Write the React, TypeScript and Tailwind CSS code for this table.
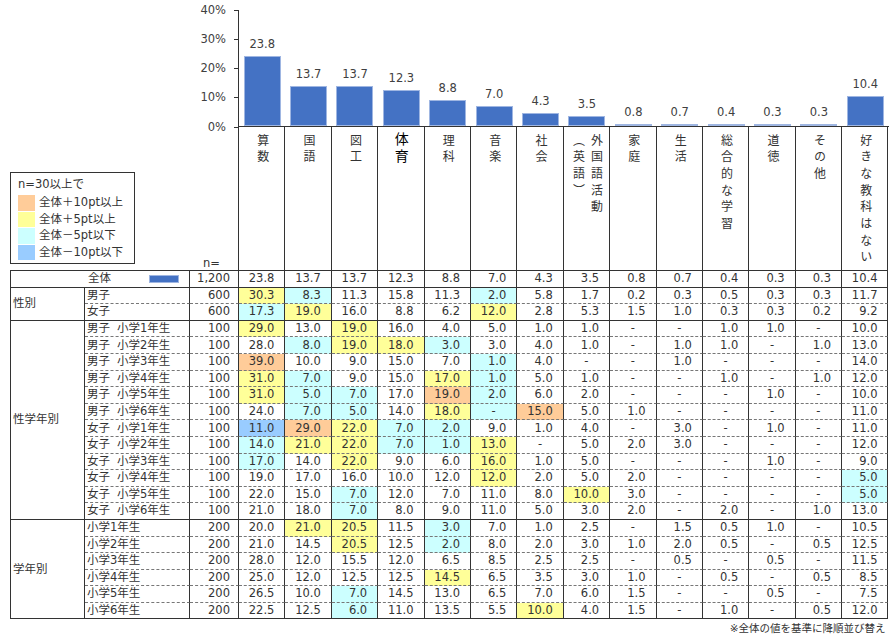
import React from "react";

const FONT = "font-['DejaVu_Sans','Noto_Sans_CJK_JP',sans-serif]";

type Col = { label: React.ReactNode; v: number; special?: "pe" | "two" };

const cols: Col[] = [
  { label: "算数", v: 23.8 },
  { label: "国語", v: 13.7 },
  { label: "図工", v: 13.7 },
  { label: "体育", v: 12.3, special: "pe" },
  { label: "理科", v: 8.8 },
  { label: "音楽", v: 7.0 },
  { label: "社会", v: 4.3 },
  { label: "外国語活動（英語）", v: 3.5, special: "two" },
  { label: "家庭", v: 0.8 },
  { label: "生活", v: 0.7 },
  { label: "総合的な学習", v: 0.4 },
  { label: "道徳", v: 0.3 },
  { label: "その他", v: 0.3 },
  { label: "好きな教科はない", v: 10.4 },
];

type Row = { a?: string; b: string; n: string; vals: string; hl: string };

const groups: { name: string; rows: Row[] }[] = [
  {
    name: "性別",
    rows: [
      { b: "男子", n: "600", vals: "30.3 8.3 11.3 15.8 11.3 2.0 5.8 1.7 0.2 0.3 0.5 0.3 0.3 11.7", hl: "YC...C........" },
      { b: "女子", n: "600", vals: "17.3 19.0 16.0 8.8 6.2 12.0 2.8 5.3 1.5 1.0 0.3 0.3 0.2 9.2", hl: "CY...Y........" },
    ],
  },
  {
    name: "性学年別",
    rows: [
      { a: "男子", b: "小学1年生", n: "100", vals: "29.0 13.0 19.0 16.0 4.0 5.0 1.0 1.0 - - 1.0 1.0 - 10.0", hl: "Y.Y..........." },
      { a: "男子", b: "小学2年生", n: "100", vals: "28.0 8.0 19.0 18.0 3.0 3.0 4.0 1.0 - 1.0 1.0 - 1.0 13.0", hl: ".CYYC........." },
      { a: "男子", b: "小学3年生", n: "100", vals: "39.0 10.0 9.0 15.0 7.0 1.0 4.0 - - 1.0 - - - 14.0", hl: "O....C........" },
      { a: "男子", b: "小学4年生", n: "100", vals: "31.0 7.0 9.0 15.0 17.0 1.0 5.0 1.0 - - 1.0 - 1.0 12.0", hl: "YC..YC........" },
      { a: "男子", b: "小学5年生", n: "100", vals: "31.0 5.0 7.0 17.0 19.0 2.0 6.0 2.0 - - - 1.0 - 10.0", hl: "YCC.OC........" },
      { a: "男子", b: "小学6年生", n: "100", vals: "24.0 7.0 5.0 14.0 18.0 - 15.0 5.0 1.0 - - - - 11.0", hl: ".CC.YCO......." },
      { a: "女子", b: "小学1年生", n: "100", vals: "11.0 29.0 22.0 7.0 2.0 9.0 1.0 4.0 - 3.0 - 1.0 - 11.0", hl: "BOYCC........." },
      { a: "女子", b: "小学2年生", n: "100", vals: "14.0 21.0 22.0 7.0 1.0 13.0 - 5.0 2.0 3.0 - - - 12.0", hl: "CYYCCY........" },
      { a: "女子", b: "小学3年生", n: "100", vals: "17.0 14.0 22.0 9.0 6.0 16.0 1.0 5.0 - - - 1.0 - 9.0", hl: "C.Y..Y........" },
      { a: "女子", b: "小学4年生", n: "100", vals: "19.0 17.0 16.0 10.0 12.0 12.0 2.0 5.0 2.0 - - - - 5.0", hl: ".....Y.......C" },
      { a: "女子", b: "小学5年生", n: "100", vals: "22.0 15.0 7.0 12.0 7.0 11.0 8.0 10.0 3.0 - - - - 5.0", hl: "..C....Y.....C" },
      { a: "女子", b: "小学6年生", n: "100", vals: "21.0 18.0 7.0 8.0 9.0 11.0 5.0 3.0 2.0 - 2.0 - 1.0 13.0", hl: "..C..........." },
    ],
  },
  {
    name: "学年別",
    rows: [
      { b: "小学1年生", n: "200", vals: "20.0 21.0 20.5 11.5 3.0 7.0 1.0 2.5 - 1.5 0.5 1.0 - 10.5", hl: ".YY.C........." },
      { b: "小学2年生", n: "200", vals: "21.0 14.5 20.5 12.5 2.0 8.0 2.0 3.0 1.0 2.0 0.5 - 0.5 12.5", hl: "..Y.C........." },
      { b: "小学3年生", n: "200", vals: "28.0 12.0 15.5 12.0 6.5 8.5 2.5 2.5 - 0.5 - 0.5 - 11.5", hl: ".............." },
      { b: "小学4年生", n: "200", vals: "25.0 12.0 12.5 12.5 14.5 6.5 3.5 3.0 1.0 - 0.5 - 0.5 8.5", hl: "....Y........." },
      { b: "小学5年生", n: "200", vals: "26.5 10.0 7.0 14.5 13.0 6.5 7.0 6.0 1.5 - - 0.5 - 7.5", hl: "..C..........." },
      { b: "小学6年生", n: "200", vals: "22.5 12.5 6.0 11.0 13.5 5.5 10.0 4.0 1.5 - 1.0 - 0.5 12.0", hl: "..C...Y......." },
    ],
  },
];

const HL: Record<string, string> = {
  Y: "bg-[#ffff99]",
  C: "bg-[#ccffff]",
  O: "bg-[#ffcc99]",
  B: "bg-[#99ccff]",
  ".": "",
};

const legend = [
  { c: "bg-[#ffcc99]", t: "全体＋10pt以上" },
  { c: "bg-[#ffff99]", t: "全体＋5pt以上" },
  { c: "bg-[#ccffff]", t: "全体－5pt以下" },
  { c: "bg-[#99ccff]", t: "全体－10pt以下" },
];

function DataCells({ vals, hl, dashed }: { vals: string; hl: string; dashed: boolean }) {
  const v = vals.split(" ");
  return (
    <>
      {v.map((x, i) => (
        <div
          key={i}
          className={`flex items-center border-r border-b border-[#333] ${dashed ? "[border-bottom-style:dashed] [border-bottom-color:#777]" : ""} ${HL[hl[i]]} ${x === "-" ? "justify-center" : "justify-end pr-[10px]"}`}
        >
          {x}
        </div>
      ))}
    </>
  );
}

export default function App() {
  return (
    <div className={`w-[895px] h-[640px] bg-white pl-[10px] text-[11.5px] text-[#333] ${FONT}`}>
      {/* chart + header */}
      <div className="flex h-[270px]">
        <div className="w-[228px] h-full flex flex-col">
          <div className="mt-[3.5px] h-[130px] flex flex-col justify-between text-[#404040]">
            {["40%", "30%", "20%", "10%", "0%"].map((l) => (
              <div key={l} className="h-[13px] flex items-center justify-end">
                <span className="leading-[13px]">{l}</span>
                <span className="ml-[8px] w-[4px] h-px bg-[#333]" />
              </div>
            ))}
          </div>
          <div className="flex-1" />
          <div className="flex items-end justify-between">
            <div className="w-[125px] border border-[#333] pl-[7px] pt-[4px] pb-[3px] mb-[6px]">
              <div className="leading-[15px]">n=30以上で</div>
              <div className="mt-[3px] flex flex-col gap-[1px]">
                {legend.map((l) => (
                  <div key={l.t} className="flex items-center h-[15.5px]">
                    <span className={`w-[17px] h-full ${l.c}`} />
                    <span className="ml-[4px] leading-[15px]">{l.t}</span>
                  </div>
                ))}
              </div>
            </div>
            <span className="mr-[18px] leading-[13px]">n=</span>
          </div>
        </div>
        <div className="w-[650.6px] h-full flex flex-col">
          <div className="h-[127px] pt-[10px]">
            <div className="h-[117px] border-l border-b border-[#333] flex">
              {cols.map((c, i) => (
                <div key={i} className="w-[46.4px] h-full flex flex-col justify-end items-center">
                  <span className="leading-[13px] mb-[5px] text-[#404040]">{c.v.toFixed(1)}</span>
                  <div
                    className="w-[37px] bg-[#4472c4] border border-[#9fb6e2]"
                    style={{ height: `${(c.v * 117) / 40}px` }}
                  />
                </div>
              ))}
            </div>
          </div>
          <div className="flex-1 flex border-l border-[#333]">
            {cols.map((c, i) => (
              <div
                key={i}
                className={`w-[46.4px] h-full border-r border-[#333] flex justify-center ${c.special === "pe" ? "pt-[5px]" : "pt-[7px]"}`}
              >
                {c.special === "pe" ? (
                  <div className="[writing-mode:vertical-rl] text-[14px] tracking-[2.7px] leading-[18px] text-black">
                    {c.label}
                  </div>
                ) : c.special === "two" ? (
                  <div className="[writing-mode:vertical-rl] text-[12px] tracking-[4.7px] leading-[18px]">
                    外国語活動
                    <br />
                    （英語）
                  </div>
                ) : (
                  <div className="[writing-mode:vertical-rl] text-[12px] tracking-[4.7px] leading-[18px]">
                    {c.label}
                  </div>
                )}
              </div>
            ))}
          </div>
        </div>
      </div>

      {/* table */}
      <div className="grid w-fit grid-cols-[74px_105px_49px_repeat(14,46.4px)] auto-rows-[16.6px] border-l border-t border-[#333]">
        <div className="col-span-2 flex items-center border-r border-b border-[#333]">
          <span className="w-[74px] shrink-0" />
          <span className="pl-[3px]">全体</span>
          <span className="ml-auto mr-[10px] w-[30px] h-[8px] bg-[#4472c4] border border-[#9fb6e2]" />
        </div>
        <div className="flex items-center justify-end pr-[8px] border-r border-b border-[#333]">1,200</div>
        <DataCells vals="23.8 13.7 13.7 12.3 8.8 7.0 4.3 3.5 0.8 0.7 0.4 0.3 0.3 10.4" hl=".............." dashed={false} />

        {groups.map((g) => (
          <React.Fragment key={g.name}>
            {g.rows.map((r, ri) => {
              const dashed = ri < g.rows.length - 1;
              const dcls = dashed ? "[border-bottom-style:dashed] [border-bottom-color:#777]" : "";
              return (
                <React.Fragment key={ri}>
                  {ri === 0 && (
                    <div
                      className={`flex items-center pl-[2px] border-r border-b border-[#333] ${
                        g.rows.length === 2 ? "row-span-2" : g.rows.length === 12 ? "row-span-12" : "row-span-6"
                      }`}
                    >
                      {g.name}
                    </div>
                  )}
                  <div className={`flex items-center pl-[2px] border-r border-b border-[#333] ${dcls}`}>
                    {r.a ? (
                      <>
                        <span>{r.a}</span>
                        <span className="ml-[7px]">{r.b}</span>
                      </>
                    ) : (
                      r.b
                    )}
                  </div>
                  <div className={`flex items-center justify-end pr-[8px] border-r border-b border-[#333] ${dcls}`}>{r.n}</div>
                  <DataCells vals={r.vals} hl={r.hl} dashed={dashed} />
                </React.Fragment>
              );
            })}
          </React.Fragment>
        ))}
      </div>
      <div className="w-[878.6px] flex justify-end pr-[3px] mt-[2px] text-[10.5px] leading-[14px]">
        ※全体の値を基準に降順並び替え
      </div>
    </div>
  );
}
